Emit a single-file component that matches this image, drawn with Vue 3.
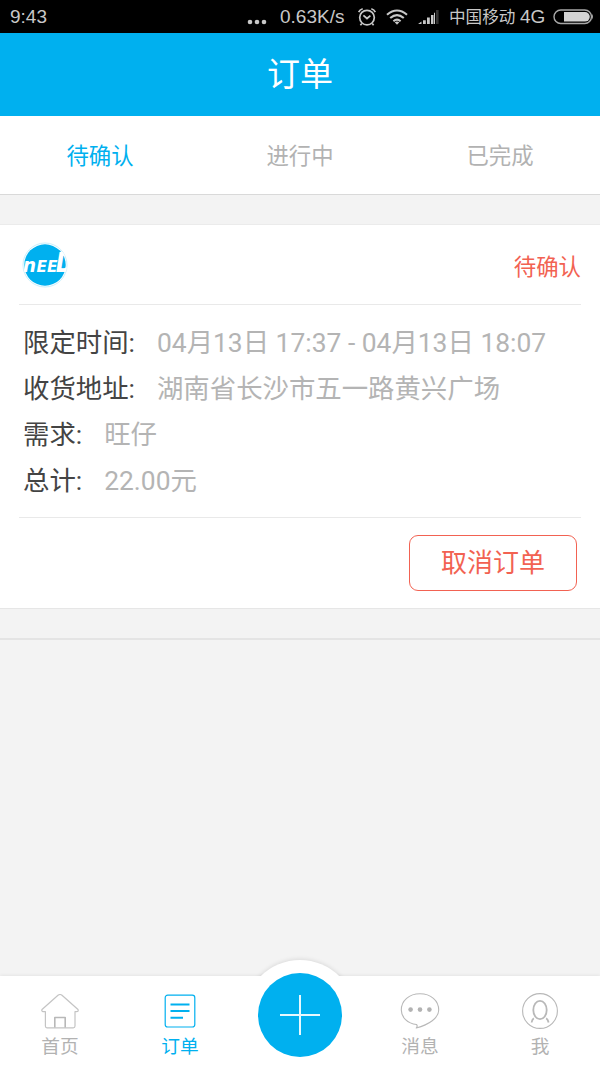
<script setup>
const tabs = [
  { label: '待确认', active: true },
  { label: '进行中', active: false },
  { label: '已完成', active: false },
]

const details = [
  { label: '限定时间:', value: '04月13日 17:37 - 04月13日 18:07', time: true },
  { label: '收货地址:', value: '湖南省长沙市五一路黄兴广场' },
  { label: '需求:', value: '旺仔' },
  { label: '总计:', value: '22.00元' },
]
</script>

<template>
  <div class="screen">
    <header class="status">
      <span class="clock">9:43</span>
      <svg class="dots" width="20" height="6" viewBox="0 0 20 6" fill="#c8c8c8">
        <circle cx="3" cy="3" r="2.3" /><circle cx="10" cy="3" r="2.3" /><circle cx="17" cy="3" r="2.3" />
      </svg>
      <span class="speed">0.63K/s</span>
      <svg class="alarm" width="20" height="20" viewBox="0 0 20 20" fill="none" stroke="#c8c8c8" stroke-width="1.7">
        <circle cx="10" cy="10.6" r="7.3" />
        <path d="M1.7 5.2Q2.8 2.6 5.7 1.8M18.3 5.2Q17.2 2.6 14.3 1.8M6.4 8.3L10 11.5L13.4 8.6M4.8 16.5L3.4 18.3M15.2 16.5L16.6 18.3" />
      </svg>
      <svg class="wifi" width="22" height="18" viewBox="0 0 22 18" fill="none" stroke="#c8c8c8" stroke-width="2.1">
        <path d="M1 6.7Q11-1.7 21 6.7M4.2 10Q11 4.3 17.8 10M7.4 13.2Q11 10.2 14.6 13.2" />
        <path d="M8.7 14.3Q11 12.8 13.3 14.3L11 16.8Z" fill="#c8c8c8" stroke="none" />
      </svg>
      <svg class="signal" width="21" height="15" viewBox="0 0 21 15" fill="#c8c8c8">
        <path d="M0 14L3.5 11.5V14ZM5 10.2H7.8V14H5ZM9 7.6H11.8V14H9ZM13 5H15.5V14H13ZM16 2.7H17V14H16Z" />
        <path d="M18 0H20.6V14H18Z" fill="#333" />
      </svg>
      <span class="carrier">中国移动 <b>4G</b></span>
      <svg class="battery" width="41" height="16" viewBox="0 0 41 16">
        <rect x="1" y="1" width="37.5" height="13.5" rx="6.75" fill="none" stroke="#a8a8a8" stroke-width="1.4" />
        <path d="M11 3H32A4.8 4.8 0 0 1 32 12.6H11Z" fill="#d4d4d4" />
        <path d="M39 5Q41 7.7 39 10.5Z" fill="#a8a8a8" />
      </svg>
    </header>

    <h1 class="title">订单</h1>

    <nav class="tabs">
      <a v-for="tab in tabs" :key="tab.label" class="tab" :class="{ active: tab.active }">{{ tab.label }}</a>
    </nav>

    <main class="content">
      <article class="card">
        <div class="card-head">
          <svg class="logo" width="46" height="46" viewBox="0 0 46 46">
            <defs><clipPath id="badge"><circle cx="23" cy="23" r="22" /></clipPath></defs>
            <circle cx="23" cy="23" r="22" fill="#fff" stroke="#c9effc" stroke-width="1" />
            <circle cx="23" cy="23" r="20.7" fill="#00b0ef" />
            <g clip-path="url(#badge)" class="brand">
              <text x="1" y="30.3" font-size="20" textLength="13" lengthAdjust="spacingAndGlyphs">n</text>
              <text x="14.5" y="30.3" font-size="15" textLength="21" lengthAdjust="spacingAndGlyphs">EE</text>
              <text x="33.8" y="30.3" font-size="26" textLength="19" lengthAdjust="spacingAndGlyphs">D</text>
            </g>
          </svg>
          <span class="state">待确认</span>
        </div>

        <dl class="details">
          <div v-for="row in details" :key="row.label" class="row">
            <dt>{{ row.label }}</dt>
            <dd :class="{ time: row.time }">{{ row.value }}</dd>
          </div>
        </dl>

        <div class="actions">
          <button class="cancel" type="button">取消订单</button>
        </div>
      </article>
      <div class="list-end"></div>
    </main>

    <footer class="bottom">
      <a class="item">
        <svg width="40" height="36" viewBox="0 0 40 36" fill="none" stroke="#c4c4c4" stroke-width="1.2" stroke-linejoin="round">
          <path d="M20 1.6Q20.8 1.2 22 2.3L38 16.5Q38.8 18.7 36.5 18.7H35V33Q35 34.8 33.2 34.8H7Q5.4 34.8 5.4 33V18.7H3Q1.2 18 2 16.5L18 2.3Q19.2 1.2 20 1.6Z" />
          <path d="M14.8 34.5V24.5H25.2V34.5" stroke="#b8b8b8" stroke-width="1.6" />
        </svg>
        <span>首页</span>
      </a>
      <a class="item active">
        <svg width="40" height="36" viewBox="0 0 40 36" fill="none" stroke="#00b0ef">
          <rect x="5.2" y="2.2" width="29.6" height="31.8" rx="2.5" stroke-width="1.2" />
          <path d="M10.5 11.5H29.5M10.5 18H29.5M10.5 24.8H23" stroke-width="2" />
        </svg>
        <span>订单</span>
      </a>
      <a class="item">
        <span class="halo"></span>
        <span class="cover"></span>
        <svg class="add" width="84" height="84" viewBox="0 0 84 84">
          <circle cx="42" cy="42" r="42" fill="#00b0ef" />
          <path d="M22 42H62M42 22V62" stroke="#e6f8fe" stroke-width="2" />
        </svg>
      </a>
      <a class="item">
        <svg width="40" height="36" viewBox="0 0 40 36" fill="none" stroke="#b8b8b8" stroke-width="1.1" stroke-linejoin="round">
          <path d="M16.5 31.5C7.5 30.5 1.3 24.4 1.3 17C1.3 7.5 9.2.8 20 .8S38.7 7.5 38.7 17C38.7 25 29 31.7 16.2 35Q18 33 16.5 31.5Z" />
          <g fill="#b2b2b2" stroke="none"><circle cx="10.6" cy="16.6" r="2.3" /><circle cx="20" cy="16.6" r="2.3" /><circle cx="29.4" cy="16.6" r="2.3" /></g>
        </svg>
        <span>消息</span>
      </a>
      <a class="item">
        <svg width="40" height="36" viewBox="0 0 40 36" fill="none" stroke="#b8b8b8">
          <circle cx="20" cy="18" r="17.4" stroke-width="1.1" />
          <ellipse cx="20" cy="17" rx="6.7" ry="9.2" stroke-width="1.8" />
          <path d="M13.8 25.3Q12 26.5 11.6 29.5M26.2 25.3Q28 26.5 28.6 29.5" stroke-width="1.8" />
        </svg>
        <span>我</span>
      </a>
    </footer>
  </div>
</template>

<style>
body {
  margin: 0;
}
</style>

<style scoped>
.screen {
  display: flex;
  flex-direction: column;
  width: 600px;
  height: 1067px;
  overflow: hidden;
  background: #f3f3f3;
  font-family: Roboto, "Noto Sans CJK SC", sans-serif;
  font-weight: 400;
}
.screen * {
  box-sizing: border-box;
}
.status {
  display: flex;
  align-items: center;
  flex: none;
  height: 33px;
  padding: 1px 6px 0 10px;
  background: #000;
  color: #c8c8c8;
  font: 19px/32px "Liberation Sans", "Noto Sans CJK SC", sans-serif;
  white-space: nowrap;
}
.clock {
  width: 237px;
}
.dots {
  margin-top: 9px;
}
.speed {
  width: 77px;
  margin-left: 13px;
}
.wifi {
  margin-left: 9px;
}
.signal {
  margin: 1px 0 0 10px;
}
.carrier {
  width: 96px;
  margin-left: 10px;
  font-size: 16.6px;
}
.carrier b {
  font-size: 19px;
  font-weight: 400;
}
.battery {
  margin-left: 8px;
}
.title {
  flex: none;
  height: 83px;
  margin: 0;
  background: #00b0ef;
  color: #fff;
  font-size: 33px;
  font-weight: 400;
  line-height: 84px;
  text-align: center;
}
.tabs {
  display: flex;
  flex: none;
  height: 79px;
  border-bottom: 1px solid #d9d9d9;
  background: #fff;
}
.tab {
  flex: 1;
  color: #b2b2b2;
  font-size: 22.4px;
  line-height: 80px;
  text-align: center;
}
.tab.active,
.item.active {
  color: #00b0ef;
}
.content {
  flex: 1;
  padding-top: 29px;
}
.card {
  height: 385px;
  padding: 0 19px;
  border-top: 1px solid #ebebeb;
  border-bottom: 1px solid #e6e6e6;
  background: #fff;
}
.card-head {
  display: flex;
  align-items: center;
  justify-content: space-between;
  height: 80px;
  border-bottom: 1px solid #e9e9e9;
}
.logo {
  margin-left: 3px;
}
.brand {
  fill: #fff;
  font-family: "DejaVu Sans", sans-serif;
  font-weight: 700;
  font-style: italic;
}
.state {
  color: #f26252;
  font-size: 22.4px;
}
.details {
  height: 213px;
  margin: 0;
  padding: 15px 0 0 4px;
  border-bottom: 1px solid #e9e9e9;
}
.row {
  display: flex;
  gap: 22px;
  height: 46px;
  font-size: 26.4px;
  line-height: 46px;
  white-space: nowrap;
}
dt {
  color: #444;
}
dd {
  margin: 0;
  color: #b4b4b4;
}
.actions {
  display: flex;
  justify-content: flex-end;
  padding: 17px 4px 0 0;
}
.cancel {
  width: 168px;
  height: 56px;
  padding: 0;
  border: 1px solid #f26252;
  border-radius: 9px;
  background: #fff;
  color: #f26252;
  font: 26px/54px Roboto, "Noto Sans CJK SC", sans-serif;
}
.list-end {
  height: 31px;
  border-bottom: 2px solid #e4e4e4;
}
.bottom {
  display: flex;
  flex: none;
  height: 91px;
  background: #fff;
  box-shadow: 0 -1px 3px rgba(0, 0, 0, 0.06);
}
.item {
  position: relative;
  display: flex;
  flex: 1;
  flex-direction: column;
  align-items: center;
  padding-top: 17px;
  color: #b2b2b2;
  font-size: 18.7px;
  line-height: 28px;
}
.item > span:last-child {
  margin-top: 4px;
}
.item svg {
  flex: none;
}
.halo {
  position: absolute;
  top: -16px;
  left: 4px;
  width: 112px;
  height: 112px;
  border-radius: 50%;
  background: #fff;
  box-shadow: 0 -1px 4px rgba(0, 0, 0, 0.1);
}
.cover {
  position: absolute;
  inset: 0 -5px;
  background: #fff;
}
.add {
  position: absolute;
  top: -3px;
  left: 18px;
}
</style>
